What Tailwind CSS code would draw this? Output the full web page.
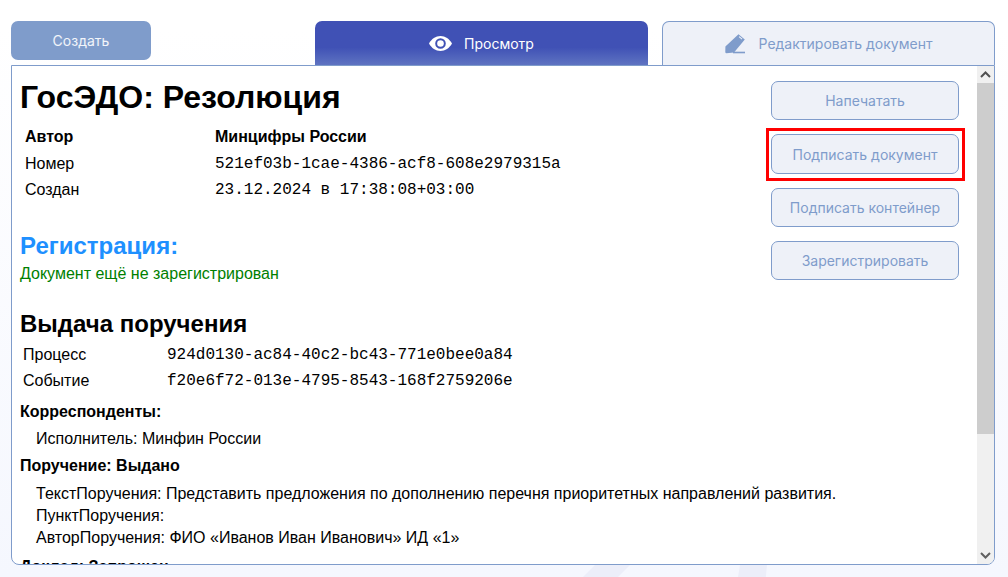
<!DOCTYPE html>
<html lang="ru">
<head>
<meta charset="utf-8">
<script src="https://cdn.jsdelivr.net/npm/@tailwindcss/browser@4"></script>
<title>ГосЭДО</title>
</head>
<body class="w-[1008px] h-[577px] overflow-hidden relative bg-gradient-to-b from-white from-[5%] to-[#f5f7fe] font-['Liberation_Sans',Arial,sans-serif] text-black">
<div class="absolute left-[583px] bottom-0 w-[47px] h-[12px] bg-[#eceef9] [clip-path:polygon(25.500%_0,100%_0,74.500%_100%,0_100%)]"></div>
<div class="absolute left-[738px] bottom-0 w-[29px] h-[12px] bg-[#eceef9] [clip-path:polygon(7%_0,100%_0,96%_100%,0_100%)]"></div>
<div class="relative flex flex-col pl-[11px] pr-[13px] pt-[21px] pb-[12px] h-full">
  <div class="flex items-start h-[44px] font-['Inter',sans-serif] text-[14px] shrink-0">
    <button class="w-[140px] h-[39px] rounded-[7px] bg-[#7f9ccb] text-white/90">Создать</button>
    <a class="ml-[164px] w-[333px] h-[44px] rounded-t-[7px] bg-gradient-to-b from-[#4051b5] from-[60%] to-[#5f73c1] text-white flex items-center justify-center gap-[12px]">
      <svg width="23" height="15" viewBox="0 0 23 15"><path fill="#fff" fill-rule="evenodd" d="M0 7.500C2.600 2.900 6.700 0 11.500 0S20.400 2.900 23 7.500C20.400 12.100 16.300 15 11.500 15S2.600 12.100 0 7.500ZM11.500 2.200a5.300 5.300 0 1 0 0 10.600 5.300 5.300 0 0 0 0-10.600Z"/><circle cx="11.500" cy="7.500" r="3.300" fill="#fff"/></svg>
      <span>Просмотр</span>
    </a>
    <a class="ml-[14px] w-[333px] h-[44px] rounded-t-[7px] border border-b-0 border-[#7f9ccb] bg-[#eef1f8] text-[#7f9ccb] flex items-center justify-center gap-[13px]">
      <svg width="21" height="20" viewBox="0 0 21 20"><path fill="#7f9ccb" fill-rule="evenodd" d="M13.500 0.300 19.800 5.500 9 18.600 1.500 19.200Q0.300 19.200 0.300 18L0.400 12.600ZM13.700 3 16.700 5.500 17.400 4.700 14.400 2.200Z"/><rect x="8" y="17.700" width="12" height="1.600" fill="#7f9ccb"/></svg>
      <span>Редактировать документ</span>
    </a>
  </div>
  <div class="flex-1 min-h-0 flex border border-[#7f9ccb] rounded-b-[8px] bg-white overflow-hidden">
    <div class="flex-1 min-w-0 relative overflow-hidden">
      <div class="absolute right-[18px] top-[15px] w-[188px] flex flex-col font-['Inter',sans-serif] text-[14px] text-[#7f9ccb]">
        <button class="h-[39px] rounded-[7px] border border-[#7f9ccb] bg-[#eef1f8]">Напечатать</button>
        <div class="relative mt-[14px]">
          <button class="w-full h-[40px] rounded-[7px] border border-[#7f9ccb] bg-[#eef1f8]">Подписать документ</button>
          <div class="absolute left-[-5px] right-[-6px] top-[-6px] bottom-[-7px] border-[3px] border-[#ff0000]"></div>
        </div>
        <button class="h-[39px] mt-[14px] rounded-[7px] border border-[#7f9ccb] bg-[#eef1f8]">Подписать контейнер</button>
        <button class="h-[39px] mt-[14px] rounded-[7px] border border-[#7f9ccb] bg-[#eef1f8]">Зарегистрировать</button>
      </div>
      <div class="pl-[8px] pt-[13px] text-[16px]">
        <h1 class="text-[32px] leading-[37px] font-bold">ГосЭДО: Резолюция</h1>
        <div class="mt-[8px] ml-[5px] grid grid-cols-[190px_1fr] auto-rows-[26.500px] items-center">
          <b>Автор</b><b>Минцифры России</b>
          <span>Номер</span><span class="font-['Liberation_Mono',monospace]">521ef03b-1cae-4386-acf8-608e2979315a</span>
          <span>Создан</span><span class="font-['Liberation_Mono',monospace]">23.12.2024 в 17:38:08+03:00</span>
        </div>
        <h2 class="mt-[28px] text-[24px] leading-[28px] font-bold text-[#1e90ff]">Регистрация:</h2>
        <p class="mt-[3px] leading-[22px] text-[#008000]">Документ ещё не зарегистрирован</p>
        <h2 class="mt-[25px] text-[24px] leading-[28px] font-bold">Выдача поручения</h2>
        <div class="mt-[4px] ml-[3px] grid grid-cols-[144px_1fr] auto-rows-[26.500px] items-center">
          <span>Процесс</span><span class="font-['Liberation_Mono',monospace]">924d0130-ac84-40c2-bc43-771e0bee0a84</span>
          <span>Событие</span><span class="font-['Liberation_Mono',monospace]">f20e6f72-013e-4795-8543-168f2759206e</span>
        </div>
        <p class="mt-[6px] leading-[22px] font-bold">Корреспонденты:</p>
        <p class="mt-[5px] ml-[16px] leading-[22px]">Исполнитель: Минфин России</p>
        <p class="mt-[5px] leading-[22px] font-bold">Поручение: Выдано</p>
        <div class="mt-[6px] ml-[16px] leading-[22px]">
          <p>ТекстПоручения: Представить предложения по дополнению перечня приоритетных направлений развития.</p>
          <p>ПунктПоручения:</p>
          <p>АвторПоручения: ФИО «Иванов Иван Иванович» ИД «1»</p>
        </div>
        <p class="mt-[7px] leading-[22px] font-bold">Доклад: Запрошен</p>
      </div>
    </div>
    <div class="w-[17px] shrink-0 flex flex-col bg-[#f0f0f0]">
      <div class="h-[17px] flex items-center justify-center"><svg width="11" height="7" viewBox="0 0 11 7"><path d="M1 6 5.500 1.500 10 6" fill="none" stroke="#505050" stroke-width="2"/></svg></div>
      <div class="h-[351px] bg-[#cdcdcd]"></div>
      <div class="flex-1"></div>
      <div class="h-[17px] flex items-center justify-center"><svg width="11" height="7" viewBox="0 0 11 7"><path d="M1 1 5.500 5.500 10 1" fill="none" stroke="#606060" stroke-width="2"/></svg></div>
    </div>
  </div>
</div>
</body>
</html>
